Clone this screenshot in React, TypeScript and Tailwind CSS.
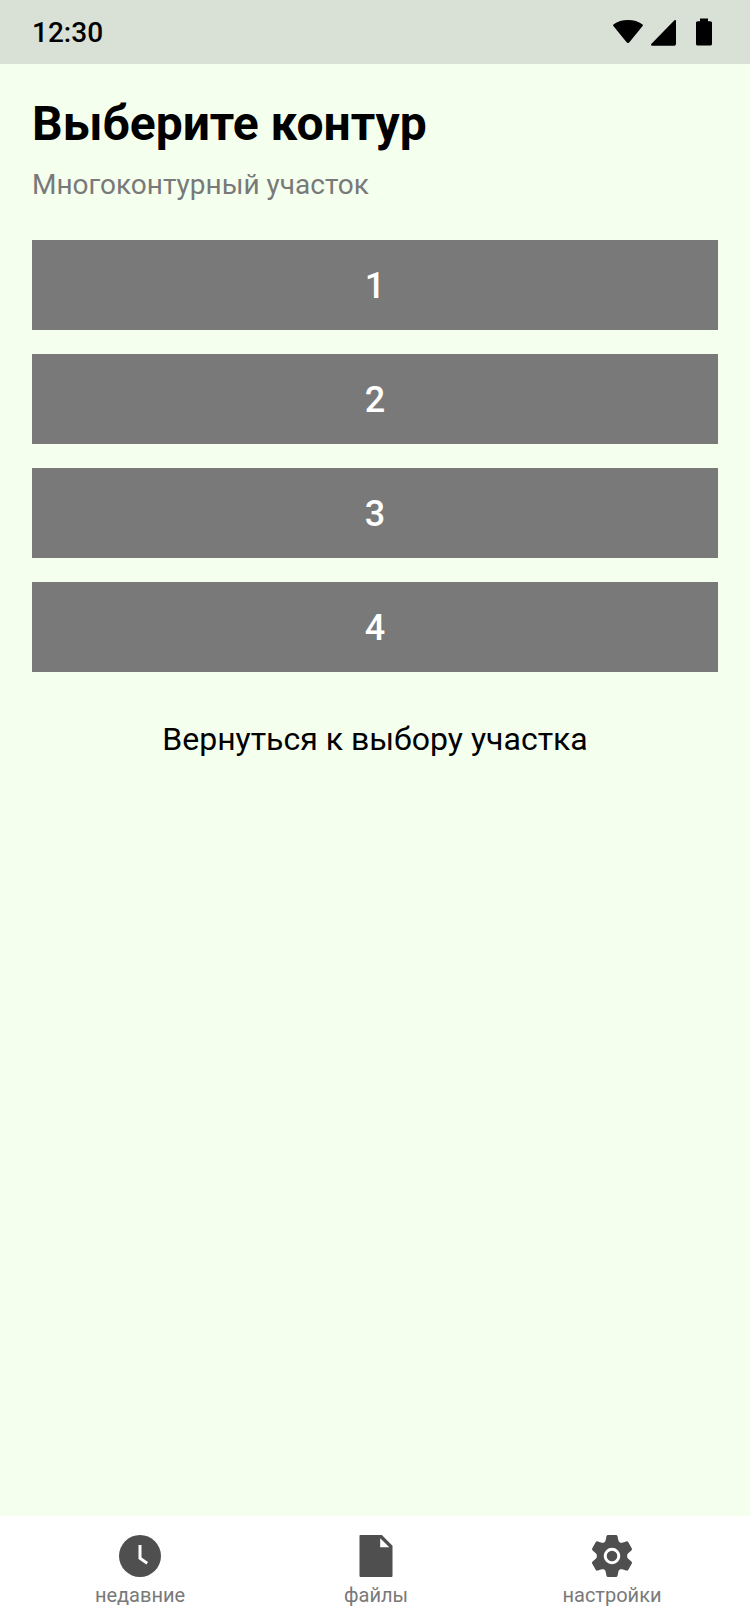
import type { ReactNode } from "react";

const contours = [1, 2, 3, 4];

function StatusIcons() {
  return (
    <div className="flex items-center" aria-hidden="true">
      <svg className="mr-2 h-6 w-[30px]" viewBox="0 0 30 24" fill="currentColor">
        <path d="M0.6 6.2C-0.1 5.5 0 4.9 0.7 4.3C4.4 1.5 9.3 0 15 0C20.700 0 25.600 1.500 29.300 4.300C30 4.900 30.100 5.500 29.400 6.200L16.600 22.100C15.600 23.300 14.400 23.300 13.400 22.100Z" />
      </svg>
      <svg className="mr-5 h-7 w-[25px]" viewBox="0 0 25 28" fill="currentColor">
        <path d="M23.200 2.400C24.200 1.500 25 2 25 3.200V25.400C25 27 24.200 27.700 22.800 27.700H1.300C-0.200 27.700 -0.400 26.600 0.500 25.700Z" />
      </svg>
      <svg className="h-7 w-4" viewBox="0 0 16 28" fill="currentColor">
        <path d="M4 0.500H12V3.300H14.200C15.400 3.300 16 4 16 5V25.800C16 27 15.400 27.600 14.200 27.600H1.800C0.600 27.600 0 27 0 25.800V5C0 4 0.600 3.300 1.800 3.300H4Z" />
      </svg>
    </div>
  );
}

function ClockIcon() {
  return (
    <svg className="h-[42px] w-[42px]" viewBox="0 0 42 42" aria-hidden="true">
      <circle cx="21" cy="21" r="21" fill="#4f4f4f" />
      <path d="M21 10V23.300L28.200 28.200" fill="none" stroke="#fff" strokeWidth="3" />
    </svg>
  );
}

function FileIcon() {
  return (
    <svg className="h-[42px] w-[34px]" viewBox="0 0 34 42" aria-hidden="true">
      <path
        d="M1.500 0H22.800L33.500 10.700V40.500C33.500 41.500 33 42 32 42H2C1 42 0.500 41.500 0.500 40.500V1C0.500 0.400 0.900 0 1.500 0Z"
        fill="#4f4f4f"
      />
      <path d="M21.200 3.200V12.300H30.300Z" fill="#fff" />
    </svg>
  );
}

function GearIcon() {
  return (
    <svg className="h-[42px] w-10" viewBox="0 0 40 42" aria-hidden="true">
      <path
        d="M16.200 0H23.800C24.800 0 25.400 0.600 25.600 1.500L26.400 5.600C26.600 6.500 27.100 7 27.900 7.400C28.700 7.900 29.400 8 30.200 7.700L34.200 6.400C35 6.100 35.800 6.400 36.200 7.100L39.700 13.200C40.200 14 40 14.800 39.400 15.400L36.200 18.200C35.500 18.800 35.200 19.400 35.200 20.200V21.800C35.200 22.600 35.500 23.200 36.200 23.800L39.400 26.600C40 27.200 40.200 28 39.700 28.800L36.200 34.900C35.800 35.600 35 35.900 34.200 35.600L30.200 34.300C29.400 34 28.700 34.100 27.900 34.600C27.100 35 26.600 35.500 26.400 36.400L25.600 40.500C25.400 41.400 24.800 42 23.800 42H16.200C15.200 42 14.600 41.400 14.400 40.500L13.600 36.400C13.400 35.500 12.900 35 12.100 34.600C11.300 34.100 10.600 34 9.800 34.300L5.800 35.600C5 35.900 4.200 35.600 3.800 34.900L0.300 28.800C-0.200 28 0 27.200 0.600 26.600L3.800 23.800C4.500 23.200 4.800 22.600 4.800 21.800V20.200C4.800 19.400 4.500 18.800 3.800 18.200L0.600 15.400C0 14.800 -0.200 14 0.300 13.200L3.800 7.100C4.200 6.400 5 6.100 5.800 6.400L9.800 7.700C10.600 8 11.300 7.900 12.100 7.400C12.900 7 13.400 6.500 13.600 5.600L14.400 1.500C14.600 0.600 15.200 0 16.200 0Z"
        fill="#4f4f4f"
      />
      <circle cx="20" cy="21" r="6.800" fill="none" stroke="#fff" strokeWidth="3" />
    </svg>
  );
}

function NavItem({ label, children }: { label: string; children: ReactNode }) {
  return (
    <a href="#" className="flex flex-col items-center gap-1.5 text-xl leading-6 text-[#797979]">
      {children}
      {label}
    </a>
  );
}

export default function App() {
  return (
    <div className="flex min-h-screen flex-col bg-[#f4ffee] font-[Roboto,sans-serif] text-black">
      <header className="flex h-16 items-center justify-between bg-[#d9e1d6] pr-[38px] pl-8">
        <time className="pt-0.5 text-[28px] leading-8 font-medium">12:30</time>
        <StatusIcons />
      </header>

      <main className="flex flex-1 flex-col px-8 pt-8">
        <h1 className="text-5xl leading-[56px] font-bold">Выберите контур</h1>
        <p className="mt-4 text-[28px] leading-[34px] text-[#797979]">Многоконтурный участок</p>

        <div className="mt-[38px] flex flex-col gap-6">
          {contours.map((n) => (
            <button key={n} type="button" className="h-[90px] bg-[#797979] pt-0.5 text-4xl font-medium text-white">
              {n}
            </button>
          ))}
        </div>

        <button type="button" className="mt-12 self-center text-[32px] leading-[38px]">
          Вернуться к выбору участка
        </button>
      </main>

      <nav className="grid grid-cols-3 bg-white pt-[19px] pr-5 pb-[17px] pl-[22px]">
        <NavItem label="недавние">
          <ClockIcon />
        </NavItem>
        <NavItem label="файлы">
          <FileIcon />
        </NavItem>
        <NavItem label="настройки">
          <GearIcon />
        </NavItem>
      </nav>
    </div>
  );
}
